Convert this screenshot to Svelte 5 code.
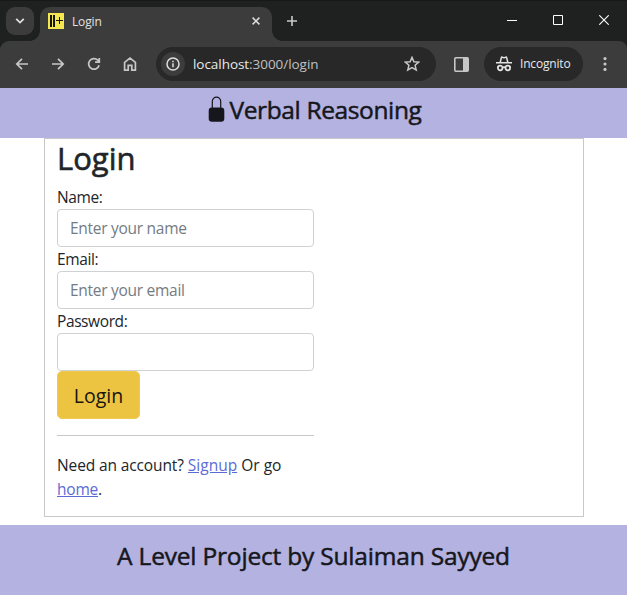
<script>
  let name = $state('');
  let email = $state('');
  let password = $state('');
</script>

<div class="window">
  <div class="strip">
    <button class="search" aria-label="Search tabs">
      <svg width="10" height="6" viewBox="0 0 10 6"><path d="M1.2.8 5 4.6 8.8.8" fill="none" stroke="#dedede" stroke-width="1.8" /></svg>
    </button>
    <div class="tab">
      <svg class="favicon" width="16" height="16" viewBox="0 0 16 16">
        <path fill="#f4e74f" d="M0 0h16v16H0z" />
        <path fill="#16160e" d="M2 2h2v12H2zM5 2h2v12H5zM8 7h7v1H8zM11 4h1v7h-1z" />
      </svg>
      <span class="tabtitle">Login</span>
      <svg class="tabclose" width="8" height="8" viewBox="0 0 8 8"><path d="m.6.6 6.8 6.8M7.4.6.6 7.4" stroke="#dedede" stroke-width="1.5" /></svg>
    </div>
    <svg class="plus" width="12" height="12" viewBox="0 0 12 12"><path d="M1 6h10M6 1v10" stroke="#c9cac9" stroke-width="1.6" /></svg>
    <div class="controls">
      <svg width="10" height="10" viewBox="0 0 10 10"><path d="M0 5.5h10" stroke="#fff" /></svg>
      <svg width="10" height="10" viewBox="0 0 10 10"><path d="M.5.5h9v9h-9z" fill="none" stroke="#fff" /></svg>
      <svg width="10" height="10" viewBox="0 0 10 10"><path d="m.3.3 9.4 9.4M9.7.3.3 9.7" stroke="#fff" stroke-width="1.1" /></svg>
    </div>
  </div>

  <div class="chrome">
    <div class="toolbar">
      <div class="nav">
        <svg width="16" height="16" viewBox="0 0 16 16"><path d="M14 8H3M8 2.8 2.8 8 8 13.2" /></svg>
        <svg width="16" height="16" viewBox="0 0 16 16"><path d="M2 8h11M8 2.8 13.2 8 8 13.2" /></svg>
        <svg width="16" height="16" viewBox="0 0 16 16"><path d="M13.1 9.2A5.3 5.3 0 1 1 11.8 4.2L13.3 5.8M13.3 2v4.2H9.1" /></svg>
        <svg width="16" height="16" viewBox="0 0 16 16"><path d="M2.6 14.2V6.3L8 2l5.4 4.3v7.9H9.8V9.3H6.2v4.9z" /></svg>
      </div>
      <div class="omnibox">
        <span class="info">
          <svg width="14" height="14" viewBox="0 0 14 14"><circle cx="7" cy="7" r="6" fill="none" stroke="#dedede" stroke-width="1.5" /><path d="M7 6.2v4M7 3.7v1.5" stroke="#dedede" stroke-width="1.5" /></svg>
        </span>
        <span class="url">localhost<i>:3000/login</i></span>
        <svg class="star" width="16" height="16" viewBox="0 0 16 16"><path d="m8 1.4 1.9 4.3 4.8.4-3.6 3.2 1.1 4.7L8 11.5 3.8 14l1.1-4.7-3.6-3.2 4.8-.4z" fill="none" stroke="#c7c7c7" stroke-width="1.5" /></svg>
      </div>
      <svg class="panel" width="15" height="15" viewBox="0 0 15 15"><rect x=".8" y=".8" width="13.4" height="13.4" rx="1" fill="none" stroke="#c7c7c7" stroke-width="1.6" /><path d="M9 1h5v13H9z" fill="#c7c7c7" /></svg>
      <div class="incognito">
        <svg width="16" height="16" viewBox="0 0 16 16">
          <path fill="#e4e4e4" d="M4.7 1.2c.2-.7.8-1 1.5-.8L8 .9l1.8-.5c.7-.2 1.3.1 1.5.8L12.5 6H16v1.6H0V6h3.5zM6 2.1 5.1 6h5.8L10 2.1 8 2.6z" />
          <g fill="none" stroke="#e4e4e4" stroke-width="1.7"><circle cx="4.2" cy="12" r="2.3" /><circle cx="11.8" cy="12" r="2.3" /><path d="M6.4 11.6q1.6-1 3.2 0M1.2 11.2h.7M14.1 11.2h.7" /></g>
        </svg>
        <span>Incognito</span>
      </div>
      <svg class="more" width="4" height="16" viewBox="0 0 4 16" fill="#c7c7c7"><circle cx="2" cy="2.6" r="1.6" /><circle cx="2" cy="8" r="1.6" /><circle cx="2" cy="13.4" r="1.6" /></svg>
    </div>
  </div>

  <header>
    <svg width="17" height="27" viewBox="0 0 17 27"><path d="M4.3 12V5.4a4.2 4.2 0 0 1 8.4 0V12" fill="none" stroke="#16171c" stroke-width="1.2" /><rect x=".7" y="11.5" width="15.6" height="14.2" rx="3.2" fill="#16171c" /></svg>
    <h3>Verbal Reasoning</h3>
  </header>

  <main>
    <form onsubmit={(event) => event.preventDefault()}>
      <h1>Login</h1>
      <label for="name">Name:</label>
      <input id="name" placeholder="Enter your name" bind:value={name} />
      <label for="email">Email:</label>
      <input id="email" placeholder="Enter your email" bind:value={email} />
      <label for="password">Password:</label>
      <input id="password" type="password" bind:value={password} />
      <button class="submit">Login</button>
      <hr />
      <p><span class="need">Need an account?</span> <a href="#signup">Signup</a> <span>Or go</span><br /><a class="home" href="#home">home</a>.</p>
    </form>
  </main>

  <footer><h3>A Level Project by Sulaiman Sayyed</h3></footer>
</div>

<style>
  :global(body) { margin: 0; overflow: hidden; background: #fff; }
  .window, .window * { box-sizing: border-box; }
  .window { width: 627px; height: 595px; display: flex; flex-direction: column; font: 15.5px/24px "Open Sans", "Noto Sans", sans-serif; color: #212529; }
  svg { display: block; flex: none; }
  h1, h3, p { margin: 0; font-weight: 400; white-space: nowrap; }

  .strip { height: 41px; flex: none; display: flex; background: #1f2120; border-top: 1px solid #171918; }
  .search { width: 28px; height: 28px; margin: 6px 0 0 6px; padding: 0; border: 0; border-radius: 9px; background: #3c3c3c; display: flex; align-items: center; justify-content: center; }
  .tab { position: relative; width: 232px; height: 34px; margin: 6px 0 0 6px; padding: 0 12px 6px 8px; background: #3c3c3c; border-radius: 10px 10px 0 0; display: flex; align-items: center; }
  .tab::before, .tab::after { content: ""; position: absolute; bottom: 0; width: 10px; height: 10px; }
  .tab::before { left: -10px; background: radial-gradient(circle at 0 0, transparent 9.5px, #3c3c3c 10px); }
  .tab::after { right: -10px; background: radial-gradient(circle at 100% 0, transparent 9.5px, #3c3c3c 10px); }
  .tabtitle { margin-left: 8px; padding-top: 2px; font-size: 12px; letter-spacing: -.15px; color: #e2e2e2; }
  .tabclose { margin-left: auto; }
  .plus { margin: 14px 0 0 14px; }
  .controls { display: flex; gap: 36px; margin: 14px 18px 0 auto; }

  .chrome { flex: none; background: #1f2120; }
  .toolbar { height: 47px; display: flex; align-items: center; background: #3c3c3c; border-radius: 9px 8px 0 0; padding: 0 20px 1px 14px; }
  .nav { display: flex; gap: 20px; }
  .nav path { fill: none; stroke: #c7c7c7; stroke-width: 1.7; }
  .omnibox { width: 280px; height: 34px; margin-left: 18px; padding: 0 16px 0 5px; border-radius: 17px; background: #282828; display: flex; align-items: center; }
  .info { width: 24px; height: 24px; border-radius: 50%; background: #3c3c3c; display: flex; align-items: center; justify-content: center; }
  .url { margin-left: 8px; font-size: 13.5px; letter-spacing: -.05px; color: #e8e8e8; }
  .url i { font-style: normal; color: #c0c0c0; }
  .star { margin-left: auto; }
  .panel { margin-left: 18px; }
  .incognito { width: 99px; height: 34px; margin-left: 15px; padding-left: 12px; border-radius: 17px; background: #282828; display: flex; align-items: center; gap: 8px; font-size: 12px; letter-spacing: -.18px; color: #e8e8e8; white-space: nowrap; }
  .more { margin-left: auto; }

  header { height: 50px; flex: none; display: flex; justify-content: center; align-items: flex-start; gap: 4px; padding: 8px 0 0 3px; background: #b4b2e0; }
  h3 { font-size: 24.5px; line-height: 30px; letter-spacing: -.37px; color: #16171c; -webkit-text-stroke: .5px #16171c; }
  header h3 { margin-top: -1px; }
  main { width: 540px; height: 379px; flex: none; margin: 0 0 8px 44px; border: 1px solid #c8c8ca; padding-left: 12px; }
  form { width: 257px; display: flex; flex-direction: column; align-items: flex-start; white-space: nowrap; }
  h1 { font-size: 31px; line-height: 38px; margin-bottom: 8px; -webkit-text-stroke: .6px #212529; }
  label { letter-spacing: -.4px; }
  input { width: 257px; height: 38px; padding: 0 12px; border: 1px solid #cfd2d4; border-radius: 4px; font: inherit; letter-spacing: -.28px; background: #fff; }
  input::placeholder { color: #747b82; opacity: 1; }
  .submit { width: 83px; height: 48px; padding: 2px 0 0; border: 1px solid #f0c94f; border-radius: 5px; background: #edc342; font: 19.5px/30px "Open Sans", sans-serif; color: #16160e; }
  hr { width: 257px; height: 1px; border: 0; margin: 16px 0 17px; background: #c6c7c8; }
  .need { letter-spacing: -.12px; }
  .home { letter-spacing: -.2px; }
  a { color: #5b6bd5; text-decoration: underline; }
  footer { flex: 1; display: flex; justify-content: center; padding-top: 16px; background: #b4b2e0; }
  footer h3 { letter-spacing: -.19px; }
</style>
